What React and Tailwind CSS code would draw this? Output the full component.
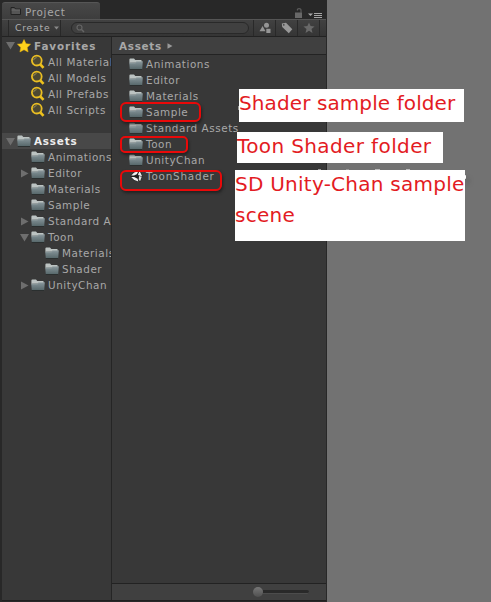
import React from 'react';

function Folder({ className = '' }) {
  return (
    <svg className={`h-[12px] w-[14px] shrink-0 ${className}`} viewBox="0 0 14 12">
      <defs>
        <linearGradient id="folder" x1="0" y1="0" x2="0" y2="1">
          <stop offset="0" stopColor="#87959a" />
          <stop offset="1" stopColor="#56676a" />
        </linearGradient>
      </defs>
      <path d="M0.4 4.8V1.5Q0.4 0.5 1.4 0.5H5L6.3 2H12.5V4.4Z" fill="#bcc3c2" />
      <path d="M0.2 4.8H6.2L7.6 3.5H13.8L13.2 11.3H0.8Z" fill="url(#folder)" />
      <path d="M0.4 4.9H6.3L7.7 3.7H13.5" fill="none" stroke="#a4afae" strokeWidth="0.6" />
      <path d="M0.8 11.5H13" stroke="#252929" strokeWidth="0.8" />
    </svg>
  );
}

function Search() {
  return (
    <svg className="h-[16px] w-[15px] shrink-0" viewBox="0 0 15 16">
      <circle cx="6.8" cy="6.6" r="4.9" fill="#4c4832" stroke="#e9be24" strokeWidth="1.8" />
      <path d="M3.5 6.2Q4.2 3.8 6.6 3.6" stroke="#9b8e58" fill="none" />
      <path d="M10.3 10.4L13.5 13.9" stroke="#edc11d" strokeWidth="2.7" />
    </svg>
  );
}

function Arrow({ open }) {
  return (
    <svg className="h-[9px] w-[9px] shrink-0" viewBox="0 0 9 9">
      <path d={open ? 'M0 1H9L4.5 8.5Z' : 'M1 0.5V8.5L8.5 4.5Z'} fill="#6e6e6e" />
    </svg>
  );
}

function Scene() {
  return (
    <svg className="h-[13px] w-[14px] shrink-0" viewBox="0 0 14 13">
      <path d="M1.5 6.3L5 1.8L11.5 0.5L13.5 6.3L11.5 12L5 10.8Z" fill="#202020" />
      <path d="M2.2 5.5L5.2 2.6L9.4 1.2L7.8 4.3L5 5.5ZM10.6 1.1L12.8 5.6L12.8 6.3L9.6 5.2L9 4.4ZM2.2 6.9H5.2L8.6 8.8L9.4 11.4L5.2 10Z" fill="#f0f0f0" />
      <path d="M12.8 6.8L11 11.5L9.8 9.3L10 6Z" fill="#ddd" />
    </svg>
  );
}

const favorites = ['All Materials', 'All Models', 'All Prefabs', 'All Scripts'];

const tree = [
  { name: 'Animations' },
  { name: 'Editor', arrow: 'closed' },
  { name: 'Materials' },
  { name: 'Sample' },
  { name: 'Standard Assets', arrow: 'closed' },
  { name: 'Toon', arrow: 'open' },
  { name: 'Materials', nested: true },
  { name: 'Shader', nested: true },
  { name: 'UnityChan', arrow: 'closed' },
];

const assets = ['Animations', 'Editor', 'Materials', 'Sample', 'Standard Assets', 'Toon', 'UnityChan', 'ToonShader'];

function Tabs() {
  return (
    <div className="flex h-[19px] items-end pl-[2px]">
      <div className="flex h-[17px] w-[98px] items-center rounded-t-[3px] border-t border-[#565656] bg-gradient-to-b from-[#484848] to-[#3d3d3d] pl-[8px]">
        <svg className="h-[10px] w-[12px]" viewBox="0 0 12 10">
          <path d="M1 8.5V1.5H4.5L5.5 3H10.5V8.5Z" fill="#555" stroke="#222" />
          <path d="M1.5 4H10" stroke="#777" strokeWidth="0.7" />
        </svg>
        <span className="ml-[3px] pt-[2px] tracking-[0.7px]">Project</span>
      </div>
      <svg className="mb-[-1px] ml-[194px] h-[12px] w-[30px]" viewBox="0 0 30 12">
        <path d="M1 4.5H8V10H1Z" fill="#686868" />
        <path d="M3.4 2.5V1.8Q3.4 0.6 5 0.6Q7 0.6 7 2V5" fill="none" stroke="#5c5c5c" strokeWidth="1.2" />
        <path d="M14 5.5H19L16.5 8Z" fill="#aaa" />
        <path d="M20 5.5H28M20 7.5H28M20 9.5H28" stroke="#a6a6a6" />
      </svg>
    </div>
  );
}

function Toolbar() {
  return (
    <div className="flex h-[18px] border-y border-t-[#555] border-b-[#222] bg-gradient-to-b from-[#414141] to-[#353535]">
      <div className="ml-[6px] flex w-[53px] items-center border-x border-[#282828] pl-[6px] text-[9.2px] tracking-[0.8px] text-[#b0b0b0]">
        Create
        <svg className="ml-[4px] h-[4px] w-[5px] shrink-0" viewBox="0 0 5 4"><path d="M0 0.5H5L2.5 3.5Z" fill="#888" /></svg>
      </div>
      <div className="ml-[10px] mt-[2px] flex h-[12px] w-[178px] items-center rounded-full border border-[#292929] bg-[#404040] pl-[4px]">
        <svg className="h-[9px] w-[9px]" viewBox="0 0 9 9">
          <circle cx="3.5" cy="3.5" r="2.5" fill="none" stroke="#656565" strokeWidth="1.2" />
          <path d="M5.3 5.3L8 8" stroke="#656565" strokeWidth="1.5" />
        </svg>
      </div>
      <div className="ml-[4px] flex w-[22px] items-center justify-center border-l border-[#292929]">
        <svg className="h-[12px] w-[12px]" viewBox="0 0 12 12">
          <path d="M0.5 9.2L3.6 4.1L6.5 9.2Z" fill="#959595" />
          <circle cx="7.5" cy="3.2" r="2.5" fill="#959595" />
          <rect x="7.3" y="6.8" width="4.2" height="4.2" fill="#959595" />
        </svg>
      </div>
      <div className="flex w-[22px] items-center justify-center border-l border-[#292929]">
        <svg className="h-[12px] w-[12px]" viewBox="0 0 12 12">
          <path fillRule="evenodd" d="M0.8 1.5L5 0.8L11.3 7.3L7.8 11.2L1.2 5ZM2.8 2.1A.8.8 0 1 0 2.8 3.7A.8.8 0 1 0 2.8 2.1Z" fill="#989898" />
        </svg>
      </div>
      <div className="flex w-[23px] items-center justify-center border-x border-[#292929]">
        <svg className="h-[12px] w-[12px]" viewBox="0 0 12 12">
          <path d="M6 0.5L7.6 4.1L11.6 4.4L8.5 7L9.5 11L6 8.8L2.5 11L3.5 7L0.4 4.4L4.4 4.1Z" fill="#696969" />
        </svg>
      </div>
    </div>
  );
}

function Sidebar() {
  return (
    <aside className="w-[110px] shrink-0 overflow-hidden border-r border-[#252525] bg-[#383838]">
      <div className="flex h-[17px] items-center pl-[4px] font-bold tracking-[0.9px]">
        <Arrow open />
        <svg className="ml-[2px] h-[14px] w-[14px]" viewBox="0 0 14 14">
          <path d="M7 0.5L9 4.7L13.6 5.2L10.2 8.4L11.1 13L7 10.8L2.9 13L3.8 8.4L0.4 5.2L5 4.7Z" fill="#ffd21c" stroke="#efb70c" strokeWidth="0.5" />
        </svg>
        <span className="ml-[3px]">Favorites</span>
      </div>
      {favorites.map((name) => (
        <div key={name} className="flex h-[16px] items-center pl-[28px]">
          <Search />
          <span className="ml-[3px] whitespace-nowrap">{name}</span>
        </div>
      ))}
      <div className="mt-[15px] flex h-[16px] items-center bg-[#484848] pl-[4px] font-bold tracking-[0.8px] text-[#eeeeee]">
        <Arrow open />
        <Folder className="ml-[2px]" />
        <span className="ml-[3px]">Assets</span>
      </div>
      {tree.map((item, i) => (
        <div key={i} className={`flex h-[16px] items-center ${item.nested ? 'pl-[32px]' : 'pl-[18px]'}`}>
          <span className="flex w-[11px] shrink-0">{item.arrow && <Arrow open={item.arrow === 'open'} />}</span>
          <Folder />
          <span className="ml-[3px] whitespace-nowrap">{item.name}</span>
        </div>
      ))}
    </aside>
  );
}

function AssetList() {
  return (
    <main className="flex min-w-0 flex-1 flex-col bg-[#383838]">
      <div className="flex h-[18px] shrink-0 items-center border-b border-[#232323] bg-[#404040] pl-[7px] font-bold tracking-[0.7px]">
        Assets
        <svg className="ml-[5px] h-[6px] w-[6px]" viewBox="0 0 6 6"><path d="M0.5 0.3V5.7L5.5 3Z" fill="#999" /></svg>
      </div>
      <div className="flex-1 pt-[1px]">
        {assets.map((name) => (
          <div key={name} className="flex h-[16px] items-center pl-[17px]">
            {name === 'ToonShader' ? <Scene /> : <Folder />}
            <span className={`ml-[3px] whitespace-nowrap ${name === 'ToonShader' ? 'tracking-[0.8px]' : ''}`}>{name}</span>
          </div>
        ))}
      </div>
      <div className="flex h-[17px] items-center border-t border-[#222] bg-[#404040] pl-[141px]">
        <div className="h-[10px] w-[10px] rounded-full bg-gradient-to-b from-[#777] to-[#505050]" />
        <div className="h-[4px] w-[46px] rounded-r-full border-b border-[#4c4c4c] bg-[#292929]" />
      </div>
    </main>
  );
}

const noteText = 'text-[20px] leading-[31px] text-[#e31b23] whitespace-nowrap';

export default function App() {
  return (
    <div className="relative h-[602px] w-[491px] overflow-hidden bg-[#727272] font-['DejaVu_Sans',sans-serif] text-[10.4px] leading-[16px] tracking-[0.56px] text-[#a8a8a8]">
      <div className="flex h-[602px] w-[327px] flex-col bg-[#282828]">
        <Tabs />
        <div className="ml-[2px] flex h-[582px] w-[324px] flex-col border-b border-[#202020]">
          <Toolbar />
          <div className="flex min-h-0 flex-1">
            <Sidebar />
            <AssetList />
          </div>
        </div>
      </div>
      <div className="absolute left-[120px] top-[102px] h-[20px] w-[81px] rounded-[6px] border-2 border-[#e90909] shadow-[1px_2px_3px_#222]" />
      <div className="absolute left-[120px] top-[136px] h-[17px] w-[68px] rounded-[5px] border-2 border-[#e90909] shadow-[1px_2px_3px_#222]" />
      <div className="absolute left-[120px] top-[170px] h-[21px] w-[102px] rounded-[6px] border-2 border-[#e90909] shadow-[1px_2px_3px_#222]" />
      <div className="absolute left-[238px] top-[106px] h-[4px] w-[1px] bg-[#999]" />
      <div className="absolute left-[318px] top-[169px] h-[1px] w-[3px] bg-[#999]" />
      <div className="absolute left-[346px] top-[169px] h-[1px] w-[3px] bg-[#999]" />
      <div className="absolute left-[375px] top-[169px] h-[1px] w-[5px] bg-[#bbb]" />
      <div className="absolute left-[406px] top-[169px] h-[1px] w-[4px] bg-[#bbb]" />
      <div className="absolute left-[464px] top-[175px] h-[4px] w-[2px] rounded-full bg-white shadow-[2px_4px_5px_#444]" />
      <div className={`absolute left-[239px] top-[89px] h-[33px] w-[225px] bg-white tracking-[0.1px] ${noteText}`}>
        <div className="-mt-[1px]">Shader sample folder</div>
      </div>
      <div className={`absolute left-[237px] top-[132px] h-[31px] w-[206px] bg-white tracking-[0.38px] ${noteText}`}>
        <div className="-mt-[1px]">Toon Shader folder</div>
      </div>
      <div className={`absolute left-[235px] top-[170px] h-[71px] w-[230px] bg-white tracking-[0.25px] ${noteText}`}>
        <div className="-mt-[1px]">SD Unity-Chan sample</div>
        <div>scene</div>
      </div>
    </div>
  );
}
